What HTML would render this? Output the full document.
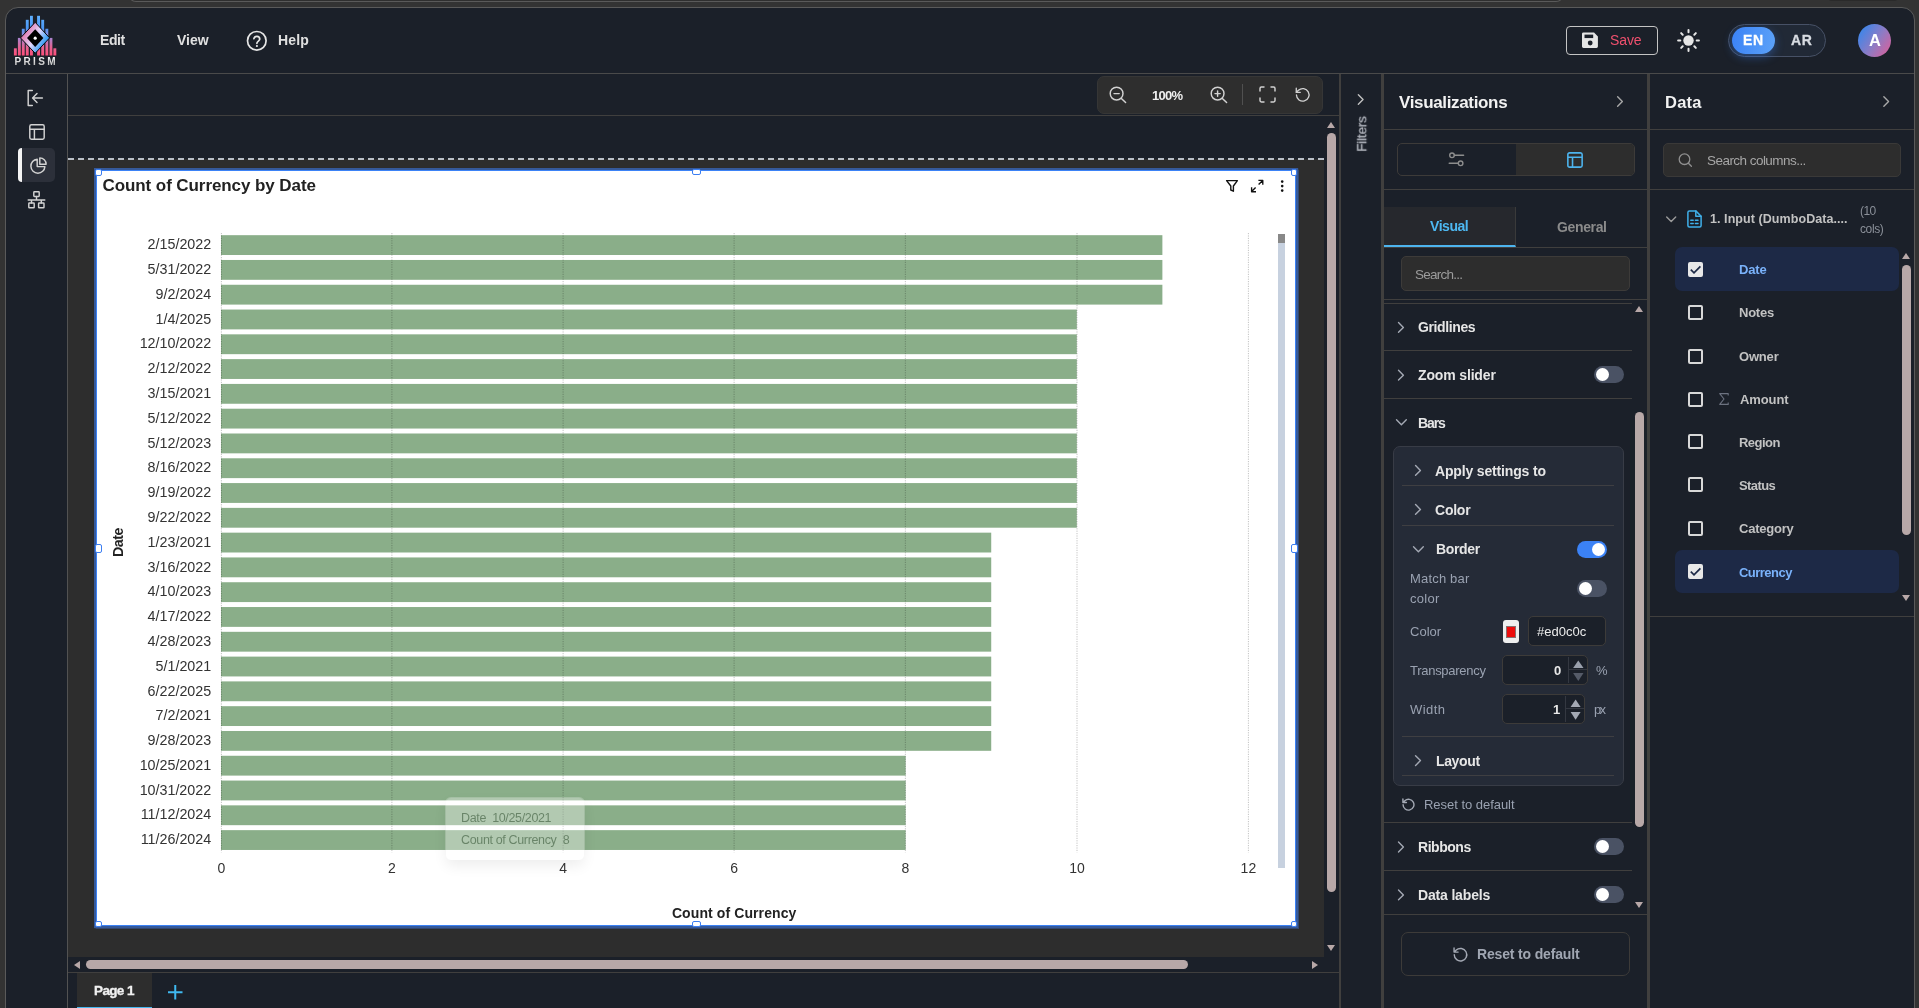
<!DOCTYPE html>
<html><head><meta charset="utf-8"><title>Prism</title>
<style>
*{box-sizing:border-box;margin:0;padding:0}
html,body{width:1919px;height:1008px;overflow:hidden;background:#333333;font-family:"Liberation Sans",sans-serif;color:#e4e4e4}
.a{position:absolute}
.t{position:absolute;white-space:nowrap;line-height:1}
.b{font-weight:bold}
#win{position:absolute;left:5px;top:7px;width:1910px;height:1020px;background:#1b2029;border:1px solid #5a5a5a;border-radius:13px 13px 0 0;overflow:hidden}
.hl{position:absolute;height:1px;background:#403f3e}
.vl{position:absolute;width:1px;background:#403f3e}
.tog{position:absolute;width:29.5px;height:17px;border-radius:9px;background:#4a5264}
.tog i{position:absolute;top:2px;left:2px;width:13px;height:13px;border-radius:50%;background:#fff}
.tog.on{background:#3b82f6}
.tog.on i{left:14.5px}
.sec{position:absolute;white-space:nowrap;line-height:1;font-weight:bold;font-size:14px;color:#e6e6e6}
.lab{position:absolute;white-space:nowrap;line-height:1;font-size:13.5px;color:#9aa3b2}
.inp{position:absolute;background:#1b2029;border:1px solid #3d3b39;border-radius:5px}
.cb{position:absolute;width:15px;height:15px;border:2px solid #d8d8d8;border-radius:2px}
.cb.on{background:#e8e8e8;border-color:#e8e8e8}
.col{position:absolute;white-space:nowrap;line-height:1;font-weight:bold;font-size:13.5px;color:#c4c4c4}
svg{position:absolute;overflow:visible}
.t,.sec,.lab,.col,svg{will-change:transform}
.ic{fill:none;stroke:#d2d2d2;stroke-width:1.45;stroke-linecap:round;stroke-linejoin:round}
</style></head><body>
<div class="a" style="left:128px;top:-6px;width:1436px;height:8px;border:1px solid #5a5a5a;border-radius:0 0 8px 8px;background:#2f2f2f"></div>
<div class="a" style="left:1826px;top:-6px;width:74px;height:7px;border-radius:0 0 6px 6px;background:#2a2a2a"></div>
<div id="win"></div>
<div class="hl" style="left:6px;top:73px;width:1908px;background:#4a4a4a"></div>
<svg style="left:0;top:0" width="70" height="70" viewBox="0 0 70 70"><defs><linearGradient id="lg1" gradientUnits="userSpaceOnUse" x1="0" y1="16" x2="0" y2="56"><stop offset="0" stop-color="#5fb0ff"/><stop offset="0.3" stop-color="#4a97f5"/><stop offset="0.55" stop-color="#a884d0"/><stop offset="0.8" stop-color="#e8608f"/><stop offset="1" stop-color="#ff4d78"/></linearGradient><linearGradient id="lg2" gradientUnits="userSpaceOnUse" x1="22" y1="30" x2="48" y2="46"><stop offset="0" stop-color="#e0609c"/><stop offset="0.5" stop-color="#e2d6fb"/><stop offset="0.8" stop-color="#4ba6f7"/><stop offset="1" stop-color="#2e94f2"/></linearGradient><linearGradient id="lg3" x1="0" y1="0" x2="0" y2="1"><stop offset="0" stop-color="#ffffff"/><stop offset="1" stop-color="#b5b5b5"/></linearGradient></defs><rect x="13.90" y="48.30" width="2.9" height="7.20" fill="url(#lg1)"/><rect x="17.90" y="37.90" width="2.9" height="17.60" fill="url(#lg1)"/><rect x="21.80" y="28.75" width="2.9" height="26.75" fill="url(#lg1)"/><rect x="25.80" y="19.80" width="2.9" height="35.70" fill="url(#lg1)"/><rect x="30.00" y="15.80" width="2.9" height="39.70" fill="url(#lg1)"/><rect x="37.10" y="15.80" width="2.9" height="39.70" fill="url(#lg1)"/><rect x="41.25" y="19.80" width="2.9" height="35.70" fill="url(#lg1)"/><rect x="45.40" y="28.75" width="2.9" height="26.75" fill="url(#lg1)"/><rect x="49.50" y="37.90" width="2.9" height="17.60" fill="url(#lg1)"/><rect x="53.40" y="48.30" width="2.9" height="7.20" fill="url(#lg1)"/><path d="M35.2 22.3 L49.6 37.9 L35.2 53.3 L20.5 37.9 Z" fill="url(#lg2)" stroke="#05070a" stroke-width="1"/><path d="M35.2 29.2 L43.4 38 L35.2 46.9 L27 38 Z" fill="#000"/><circle cx="35.2" cy="38.2" r="1.6" fill="#fff"/><text x="14.6" y="64.8" font-family="Liberation Sans" font-weight="bold" font-size="10" letter-spacing="2.3" fill="url(#lg3)">PRISM</text></svg>
<div class="t" style="left:100.00px;top:33.15px;font-size:14px;color:#e0e0e0;letter-spacing:-0.387px;font-weight:bold;">Edit</div>
<div class="t" style="left:177.00px;top:33.15px;font-size:14px;color:#e0e0e0;letter-spacing:0.030px;font-weight:bold;">View</div>
<svg style="left:246px;top:30px" width="22" height="22" viewBox="0 0 22 22"><circle cx="10.8" cy="10.8" r="9.3" fill="none" stroke="#e6e6e6" stroke-width="1.7"/><path d="M7.9 8.6a3 3 0 0 1 5.9 0.5c0 1.9-2.9 2.2-2.9 4.2" fill="none" stroke="#e6e6e6" stroke-width="1.7" stroke-linecap="round"/><circle cx="10.9" cy="16" r="1.1" fill="#e6e6e6"/></svg>
<div class="t" style="left:278.30px;top:33.15px;font-size:14px;color:#e0e0e0;letter-spacing:0.130px;font-weight:bold;">Help</div>
<div class="a" style="left:1566px;top:26px;width:92px;height:29px;border:1px solid #c4c4c4;border-radius:4px"></div>
<svg style="left:1581.7px;top:32.4px" width="16.4" height="16.6" viewBox="0 0 17 17"><path d="M1.5 0.5h11l4 4v10.5a1.5 1.5 0 0 1-1.5 1.5h-13.5a1.5 1.5 0 0 1-1.5-1.5v-13a1.5 1.5 0 0 1 1.5-1.5z" fill="#e6e6e6"/><rect x="2.6" y="2.6" width="9" height="3.6" fill="#1b2029"/><circle cx="8.5" cy="11.3" r="2.5" fill="#1b2029"/></svg>
<div class="t" style="left:1610.30px;top:33.35px;font-size:14px;color:#f0506e;letter-spacing:-0.107px;">Save</div>
<svg style="left:1676px;top:28px" width="25" height="25" viewBox="-12.5 -12.5 25 25"><circle r="5.2" fill="#e6e6e6"/><line x1="8.20" y1="0.00" x2="10.40" y2="0.00" stroke="#e6e6e6" stroke-width="2" stroke-linecap="round"/><line x1="5.80" y1="5.80" x2="7.35" y2="7.35" stroke="#e6e6e6" stroke-width="2" stroke-linecap="round"/><line x1="0.00" y1="8.20" x2="0.00" y2="10.40" stroke="#e6e6e6" stroke-width="2" stroke-linecap="round"/><line x1="-5.80" y1="5.80" x2="-7.35" y2="7.35" stroke="#e6e6e6" stroke-width="2" stroke-linecap="round"/><line x1="-8.20" y1="0.00" x2="-10.40" y2="0.00" stroke="#e6e6e6" stroke-width="2" stroke-linecap="round"/><line x1="-5.80" y1="-5.80" x2="-7.35" y2="-7.35" stroke="#e6e6e6" stroke-width="2" stroke-linecap="round"/><line x1="-0.00" y1="-8.20" x2="-0.00" y2="-10.40" stroke="#e6e6e6" stroke-width="2" stroke-linecap="round"/><line x1="5.80" y1="-5.80" x2="7.35" y2="-7.35" stroke="#e6e6e6" stroke-width="2" stroke-linecap="round"/></svg>
<div class="a" style="left:1728px;top:24px;width:98px;height:33px;border:1px solid #475166;border-radius:17px;background:#212936"></div>
<div class="a" style="left:1732px;top:27px;width:43px;height:27px;border-radius:14px;background:linear-gradient(100deg,#3b82f6,#5ca2f8);box-shadow:0 3px 10px rgba(59,130,246,0.4)"></div>
<div class="t" style="left:1743.00px;top:33.15px;font-size:14px;color:#ffffff;letter-spacing:0.640px;font-weight:bold;-webkit-text-stroke:0.3px #fff;">EN</div>
<div class="t" style="left:1790.80px;top:33.15px;font-size:14px;color:#d8dce2;letter-spacing:0.570px;font-weight:bold;-webkit-text-stroke:0.3px #d8dce2;">AR</div>
<div class="a" style="left:1858px;top:24px;width:33px;height:33px;border-radius:50%;background:linear-gradient(125deg,#3b86ea 10%,#8f7bc4 55%,#d9609a 95%)"></div>
<div class="t" style="left:1868.70px;top:32.03px;font-size:16.5px;color:#ffffff;letter-spacing:0.000px;font-weight:bold;">A</div>
<div class="vl" style="left:67px;top:74px;height:940px;background:#525252"></div>
<svg style="left:27px;top:89px" width="17" height="18" viewBox="0 0 17 18"><path class="ic" d="M5.3 1.5H1.2v15h4.1"/><path class="ic" d="M15.4 9H5.8M10 4.6L5.6 9l4.4 4.4"/></svg>
<svg style="left:29px;top:124px" width="16" height="16" viewBox="0 0 16 16"><rect class="ic" x="0.8" y="0.8" width="14.4" height="14.4" rx="1.6"/><path class="ic" d="M0.8 5.2h14.4M5.4 5.2v10"/></svg>
<div class="a" style="left:18px;top:148px;width:37px;height:34px;border-radius:5px;background:#2c303a"></div>
<div class="a" style="left:18px;top:148px;width:4px;height:34px;border-radius:4px 0 0 4px;background:#f4f4f4"></div>
<svg style="left:30px;top:157px" width="17" height="17" viewBox="0 0 17 17"><path class="ic" d="M7.2 2.2A7 7 0 1 0 14.9 9.6H7.2z"/><path class="ic" d="M9.8 0.9a6.2 6.2 0 0 1 6.3 6.3H9.8z"/></svg>
<svg style="left:28px;top:191px" width="17" height="18" viewBox="0 0 17 18"><rect class="ic" x="5.8" y="0.8" width="5.4" height="4.6" rx="0.6"/><rect class="ic" x="0.8" y="12" width="5.4" height="4.8" rx="0.6"/><rect class="ic" x="10.6" y="12" width="5.4" height="4.8" rx="0.6"/><path class="ic" d="M0.2 9h16.6M8.5 5.4V9M3.5 9v3M13.3 9v3"/></svg>
<div class="hl" style="left:68px;top:115px;width:1272px"></div>
<div class="a" style="left:68px;top:159px;width:1256px;height:798px;background:#2d2d2d"></div>
<div class="a" style="left:68px;top:158px;width:1256px;height:0;border-top:2px dashed #b9bec6"></div>
<div class="a" style="left:1097px;top:76px;width:226px;height:38px;border-radius:7px;background:#2e2e2e;border:1px solid #363636"></div>
<svg style="left:1109px;top:86px" width="18" height="18" viewBox="0 0 18 18"><circle class="ic" cx="7.6" cy="7.6" r="6.4"/><path class="ic" d="M12.4 12.4L16.6 16.6M5 7.6h5.2"/></svg>
<div class="t" style="left:1152.20px;top:89.00px;font-size:13px;color:#f0f0f0;letter-spacing:-0.727px;font-weight:bold;">100%</div>
<svg style="left:1210px;top:86px" width="18" height="18" viewBox="0 0 18 18"><circle class="ic" cx="7.6" cy="7.6" r="6.4"/><path class="ic" d="M12.4 12.4L16.6 16.6M5 7.6h5.2M7.6 5v5.2"/></svg>
<div class="vl" style="left:1242px;top:84px;height:21px;background:#505050"></div>
<svg style="left:1259px;top:86px" width="17" height="17" viewBox="0 0 17 17"><path class="ic" d="M1 5V2.4A1.4 1.4 0 0 1 2.4 1H5M12 1h2.6A1.4 1.4 0 0 1 16 2.4V5M16 12v2.6a1.4 1.4 0 0 1-1.4 1.4H12M5 16H2.4A1.4 1.4 0 0 1 1 14.600V12"/></svg>
<svg style="left:1294.5px;top:87px" width="15.5" height="15.5" viewBox="0 0 17 17"><path class="ic" d="M1.6 8.8a6.9 6.9 0 1 0 2.2-5.2L1.4 5.8"/><path class="ic" d="M1.4 1.4v4.4h4.4"/></svg>
<div class="a" style="left:1327px;top:121.5px;width:0;height:0;border-left:4.5px solid transparent;border-right:4.5px solid transparent;border-bottom:6.5px solid #b8a8a8"></div>
<div class="a" style="left:1327px;top:133px;width:9px;height:759px;border-radius:5px;background:#b8a8a8"></div>
<div class="a" style="left:1327px;top:945px;width:0;height:0;border-left:4.5px solid transparent;border-right:4.5px solid transparent;border-top:6.5px solid #b8a8a8"></div>
<div class="a" style="left:73.8px;top:960.5px;width:0;height:0;border-top:4.5px solid transparent;border-bottom:4.5px solid transparent;border-right:6.5px solid #b8a8a8"></div>
<div class="a" style="left:86px;top:960px;width:1102px;height:9.3px;border-radius:5px;background:#b8a8a8"></div>
<div class="a" style="left:1312px;top:960.5px;width:0;height:0;border-top:4.5px solid transparent;border-bottom:4.5px solid transparent;border-left:6.5px solid #b8a8a8"></div>
<div class="hl" style="left:68px;top:972px;width:1272px"></div>
<div class="a" style="left:77px;top:973px;width:75px;height:35.5px;background:#2d2d2d;border-bottom:2px solid #45b6ee"></div>
<div class="t" style="left:93.75px;top:983.57px;font-size:13.5px;color:#f0f0f0;letter-spacing:-0.628px;font-weight:bold;-webkit-text-stroke:0.35px #f0f0f0;">Page 1</div>
<svg style="left:167.5px;top:984.5px" width="14.5" height="14.5" viewBox="0 0 14.5 14.5"><path d="M7.25 0v14.5M0 7.25h14.5" stroke="#3fb8f0" stroke-width="2" fill="none"/></svg>
<div class="a" style="left:1339px;top:74px;width:2px;height:940px;background:#403f3e"></div>
<div class="a" style="left:96px;top:170px;width:1200px;height:756px;background:#fff;border:1px solid #3b82f6;box-shadow:0 0 0 2px #35599a,0 0 1px 2.5px rgba(53,89,154,0.6)"></div>
<svg style="left:0;top:0" width="1919" height="1008" viewBox="0 0 1919 1008" font-family="Liberation Sans"><rect x="221.00" y="235.18" width="941.38" height="19.83" fill="#8aae89"/><rect x="221.00" y="259.97" width="941.38" height="19.83" fill="#8aae89"/><rect x="221.00" y="284.76" width="941.38" height="19.83" fill="#8aae89"/><rect x="221.00" y="309.55" width="855.80" height="19.83" fill="#8aae89"/><rect x="221.00" y="334.34" width="855.80" height="19.83" fill="#8aae89"/><rect x="221.00" y="359.13" width="855.80" height="19.83" fill="#8aae89"/><rect x="221.00" y="383.92" width="855.80" height="19.83" fill="#8aae89"/><rect x="221.00" y="408.71" width="855.80" height="19.83" fill="#8aae89"/><rect x="221.00" y="433.50" width="855.80" height="19.83" fill="#8aae89"/><rect x="221.00" y="458.29" width="855.80" height="19.83" fill="#8aae89"/><rect x="221.00" y="483.08" width="855.80" height="19.83" fill="#8aae89"/><rect x="221.00" y="507.87" width="855.80" height="19.83" fill="#8aae89"/><rect x="221.00" y="532.66" width="770.22" height="19.83" fill="#8aae89"/><rect x="221.00" y="557.45" width="770.22" height="19.83" fill="#8aae89"/><rect x="221.00" y="582.24" width="770.22" height="19.83" fill="#8aae89"/><rect x="221.00" y="607.03" width="770.22" height="19.83" fill="#8aae89"/><rect x="221.00" y="631.82" width="770.22" height="19.83" fill="#8aae89"/><rect x="221.00" y="656.61" width="770.22" height="19.83" fill="#8aae89"/><rect x="221.00" y="681.40" width="770.22" height="19.83" fill="#8aae89"/><rect x="221.00" y="706.19" width="770.22" height="19.83" fill="#8aae89"/><rect x="221.00" y="730.98" width="770.22" height="19.83" fill="#8aae89"/><rect x="221.00" y="755.77" width="684.64" height="19.83" fill="#8aae89"/><rect x="221.00" y="780.56" width="684.64" height="19.83" fill="#8aae89"/><rect x="221.00" y="805.35" width="684.64" height="19.83" fill="#8aae89"/><rect x="221.00" y="830.14" width="684.64" height="19.83" fill="#8aae89"/><line x1="221.40" y1="233" x2="221.40" y2="852.5" stroke="rgba(0,0,0,0.24)" stroke-width="1" stroke-dasharray="1.2,1.2"/><text x="221.40" y="873" font-size="14" fill="#333" text-anchor="middle">0</text><line x1="391.90" y1="233" x2="391.90" y2="852.5" stroke="rgba(0,0,0,0.24)" stroke-width="1" stroke-dasharray="1.2,1.2"/><text x="391.90" y="873" font-size="14" fill="#333" text-anchor="middle">2</text><line x1="563.10" y1="233" x2="563.10" y2="852.5" stroke="rgba(0,0,0,0.24)" stroke-width="1" stroke-dasharray="1.2,1.2"/><text x="563.10" y="873" font-size="14" fill="#333" text-anchor="middle">4</text><line x1="734.10" y1="233" x2="734.10" y2="852.5" stroke="rgba(0,0,0,0.24)" stroke-width="1" stroke-dasharray="1.2,1.2"/><text x="734.10" y="873" font-size="14" fill="#333" text-anchor="middle">6</text><line x1="905.35" y1="233" x2="905.35" y2="852.5" stroke="rgba(0,0,0,0.24)" stroke-width="1" stroke-dasharray="1.2,1.2"/><text x="905.35" y="873" font-size="14" fill="#333" text-anchor="middle">8</text><line x1="1077.00" y1="233" x2="1077.00" y2="852.5" stroke="rgba(0,0,0,0.24)" stroke-width="1" stroke-dasharray="1.2,1.2"/><text x="1077.00" y="873" font-size="14" fill="#333" text-anchor="middle">10</text><line x1="1248.40" y1="233" x2="1248.40" y2="852.5" stroke="rgba(0,0,0,0.24)" stroke-width="1" stroke-dasharray="1.2,1.2"/><text x="1248.40" y="873" font-size="14" fill="#333" text-anchor="middle">12</text><text x="211.2" y="249.29" font-size="14.3" fill="#333" text-anchor="end">2/15/2022</text><text x="211.2" y="274.08" font-size="14.3" fill="#333" text-anchor="end">5/31/2022</text><text x="211.2" y="298.87" font-size="14.3" fill="#333" text-anchor="end">9/2/2024</text><text x="211.2" y="323.66" font-size="14.3" fill="#333" text-anchor="end">1/4/2025</text><text x="211.2" y="348.45" font-size="14.3" fill="#333" text-anchor="end">12/10/2022</text><text x="211.2" y="373.24" font-size="14.3" fill="#333" text-anchor="end">2/12/2022</text><text x="211.2" y="398.03" font-size="14.3" fill="#333" text-anchor="end">3/15/2021</text><text x="211.2" y="422.82" font-size="14.3" fill="#333" text-anchor="end">5/12/2022</text><text x="211.2" y="447.61" font-size="14.3" fill="#333" text-anchor="end">5/12/2023</text><text x="211.2" y="472.40" font-size="14.3" fill="#333" text-anchor="end">8/16/2022</text><text x="211.2" y="497.19" font-size="14.3" fill="#333" text-anchor="end">9/19/2022</text><text x="211.2" y="521.99" font-size="14.3" fill="#333" text-anchor="end">9/22/2022</text><text x="211.2" y="546.78" font-size="14.3" fill="#333" text-anchor="end">1/23/2021</text><text x="211.2" y="571.57" font-size="14.3" fill="#333" text-anchor="end">3/16/2022</text><text x="211.2" y="596.36" font-size="14.3" fill="#333" text-anchor="end">4/10/2023</text><text x="211.2" y="621.14" font-size="14.3" fill="#333" text-anchor="end">4/17/2022</text><text x="211.2" y="645.93" font-size="14.3" fill="#333" text-anchor="end">4/28/2023</text><text x="211.2" y="670.73" font-size="14.3" fill="#333" text-anchor="end">5/1/2021</text><text x="211.2" y="695.51" font-size="14.3" fill="#333" text-anchor="end">6/22/2025</text><text x="211.2" y="720.31" font-size="14.3" fill="#333" text-anchor="end">7/2/2021</text><text x="211.2" y="745.10" font-size="14.3" fill="#333" text-anchor="end">9/28/2023</text><text x="211.2" y="769.88" font-size="14.3" fill="#333" text-anchor="end">10/25/2021</text><text x="211.2" y="794.67" font-size="14.3" fill="#333" text-anchor="end">10/31/2022</text><text x="211.2" y="819.46" font-size="14.3" fill="#333" text-anchor="end">11/12/2024</text><text x="211.2" y="844.26" font-size="14.3" fill="#333" text-anchor="end">11/26/2024</text><text x="734.2" y="917.5" font-size="14" font-weight="bold" fill="#222" text-anchor="middle" letter-spacing="0.1">Count of Currency</text><text transform="translate(123.3,542.5) rotate(-90)" font-size="14.3" font-weight="bold" fill="#222" text-anchor="middle" letter-spacing="-0.45">Date</text><text x="102.5" y="191" font-size="17" font-weight="bold" fill="#222" letter-spacing="-0.08">Count of Currency by Date</text><rect x="1278" y="234" width="7" height="634" fill="#c7d1df"/><rect x="1278" y="234" width="7" height="9" fill="#888"/><path d="M1226.6 180.6h10.8l-4 5.4v5.2l-2.6-1.2v-4z" fill="none" stroke="#111" stroke-width="1.4" stroke-linejoin="round"/><path d="M1258.600 184.600l4.100-4.100M1255.600 187.600l-4 4M1258.400 180.400h4.400v4.400M1256.000 191.700h-4.400v-4.400" fill="none" stroke="#111" stroke-width="1.35" stroke-linecap="butt" stroke-linejoin="round"/><circle cx="1282.2" cy="181.600" r="1.3" fill="#111"/><circle cx="1282.200" cy="186.100" r="1.3" fill="#111"/><circle cx="1282.200" cy="190.600" r="1.3" fill="#111"/></svg>
<div class="a" style="left:446px;top:798px;width:138px;height:62px;border-radius:5px;background:rgba(255,255,255,0.34);box-shadow:0 6px 14px rgba(0,0,0,0.07), 0 0 0 1px rgba(255,255,255,0.25)"></div>
<div class="t" style="left:460.5px;top:811.5px;font-size:12.5px;color:rgba(60,90,60,0.62);letter-spacing:-0.35px;word-spacing:3px">Date 10/25/2021</div>
<div class="t" style="left:460.5px;top:833.5px;font-size:12.5px;color:rgba(60,90,60,0.62);letter-spacing:-0.35px">Count of Currency&nbsp; 8</div>
<div class="a" style="left:95px;top:169px;width:7px;height:7px;background:#fff;border:1px solid #3b7ef2;border-radius:2px"></div>
<div class="a" style="left:1290.5px;top:169px;width:6.5px;height:7px;background:#fff;border:1px solid #3b7ef2;border-radius:2px"></div>
<div class="a" style="left:95px;top:920.5px;width:7px;height:6.5px;background:#fff;border:1px solid #3b7ef2;border-radius:2px"></div>
<div class="a" style="left:1290.7px;top:920.7px;width:6.3px;height:6.3px;background:#fff;border:1px solid #3b7ef2;border-radius:2px"></div>
<div class="a" style="left:692px;top:169.3px;width:9.4px;height:6.2px;background:#fff;border:1px solid #3b7ef2;border-radius:2px"></div>
<div class="a" style="left:692px;top:920.8px;width:9.4px;height:6.2px;background:#fff;border:1px solid #3b7ef2;border-radius:2px"></div>
<div class="a" style="left:95.3px;top:544px;width:6.6px;height:9.4px;background:#fff;border:1px solid #3b7ef2;border-radius:2px"></div>
<div class="a" style="left:1291px;top:544px;width:6.6px;height:9.4px;background:#fff;border:1px solid #3b7ef2;border-radius:2px"></div>
<div class="a" style="left:1381px;top:74px;width:3px;height:940px;background:#403f3e"></div>
<div class="t" style="left:1361.6px;top:133.8px;font-size:13.5px;color:#b0b4bc;transform:translate(-50%,-50%) rotate(-90deg);letter-spacing:-0.15px;-webkit-text-stroke:0.3px #b0b4bc">Filters</div>
<div class="a" style="left:1647px;top:74px;width:3px;height:940px;background:#403f3e"></div>
<div class="t" style="left:1399.00px;top:93.91px;font-size:17px;color:#f2f2f2;letter-spacing:-0.342px;font-weight:bold;">Visualizations</div>
<div class="hl" style="left:1384px;top:129px;width:263px"></div>
<div class="a" style="left:1397px;top:143px;width:238px;height:33px;border:1px solid #3d3b39;border-radius:5px;overflow:hidden"><div class="a" style="left:118px;top:0;width:120px;height:33px;background:#2d2d2d"></div></div>
<svg style="left:1448.2px;top:151.4px" width="17" height="17" viewBox="0 0 17 17"><g fill="none" stroke="#8d8d8d" stroke-width="1.4" stroke-linecap="round"><circle cx="4" cy="4.300" r="2.3"/><path d="M6.400 4.300h9.200"/><circle cx="12.600" cy="12.300" r="2.3"/><path d="M1.200 12.300h9"/></g></svg>
<svg style="left:1566.5px;top:151.6px" width="16.2" height="16.2" viewBox="0 0 17 17"><g fill="none" stroke="#4db4ee" stroke-width="1.65" stroke-linejoin="round"><rect x="0.900" y="0.900" width="15" height="15" rx="1.8"/><path d="M0.900 5.600h15M5.800 5.600v10.300"/></g></svg>
<div class="hl" style="left:1384px;top:189px;width:263px"></div>
<div class="a" style="left:1384px;top:207px;width:132px;height:40px;background:#26282d;border-right:1px solid #3a3a3a;border-bottom:2px solid #4db4ee"></div>
<div class="t" style="left:1430.00px;top:219.15px;font-size:14px;color:#4db8f2;letter-spacing:-0.454px;font-weight:bold;">Visual</div>
<div class="t" style="left:1556.50px;top:220.05px;font-size:14px;color:#8b8b8b;letter-spacing:-0.358px;font-weight:bold;">General</div>
<div class="hl" style="left:1384px;top:247px;width:263px"></div>
<div class="a" style="left:1401px;top:256px;width:229px;height:35px;background:#2d2d2d;border:1px solid #3d3b39;border-radius:5px"></div>
<div class="t" style="left:1414.60px;top:267.57px;font-size:13.5px;color:#9c9c9c;letter-spacing:-0.763px;">Search...</div>
<div class="hl" style="left:1384px;top:299px;width:263px"></div>
<div class="hl" style="left:1384px;top:303px;width:248px"></div>
<div class="a" style="left:1634.5px;top:306px;width:0;height:0;border-left:4.5px solid transparent;border-right:4.5px solid transparent;border-bottom:6px solid #b8a8a8"></div>
<div class="a" style="left:1635px;top:412px;width:9px;height:415px;border-radius:5px;background:#b8a8a8"></div>
<div class="a" style="left:1634.5px;top:902px;width:0;height:0;border-left:4.5px solid transparent;border-right:4.5px solid transparent;border-top:6px solid #b8a8a8"></div>
<div class="t" style="left:1417.75px;top:320.40px;font-size:14px;color:#e6e6e6;letter-spacing:-0.386px;font-weight:bold;">Gridlines</div>
<div class="hl" style="left:1384px;top:350px;width:248px"></div>
<div class="t" style="left:1417.75px;top:368.15px;font-size:14px;color:#e6e6e6;letter-spacing:-0.148px;font-weight:bold;">Zoom slider</div>
<div class="tog" style="left:1594px;top:366px"><i></i></div>
<div class="hl" style="left:1384px;top:398px;width:248px"></div>
<div class="t" style="left:1417.75px;top:416.05px;font-size:14px;color:#e6e6e6;letter-spacing:-1.083px;font-weight:bold;">Bars</div>
<div class="a" style="left:1393px;top:446px;width:231px;height:340px;background:#252b37;border:1px solid #383c46;border-radius:7px"></div>
<div class="t" style="left:1435.25px;top:464.40px;font-size:14px;color:#e6e6e6;letter-spacing:-0.159px;font-weight:bold;">Apply settings to</div>
<div class="hl" style="left:1402px;top:485px;width:212px;background:#3f3f42"></div>
<div class="t" style="left:1435.25px;top:503.15px;font-size:14px;color:#e6e6e6;letter-spacing:-0.235px;font-weight:bold;">Color</div>
<div class="hl" style="left:1402px;top:525px;width:212px;background:#3f3f42"></div>
<div class="t" style="left:1435.60px;top:541.90px;font-size:14px;color:#e6e6e6;letter-spacing:-0.364px;font-weight:bold;">Border</div>
<div class="tog on" style="left:1577px;top:541px"><i></i></div>
<div class="t" style="left:1410.40px;top:572.10px;font-size:13px;color:#9aa2b1;letter-spacing:0.177px;">Match bar</div>
<div class="t" style="left:1410.40px;top:591.90px;font-size:13px;color:#9aa2b1;letter-spacing:0.297px;">color</div>
<div class="tog" style="left:1577px;top:580px"><i></i></div>
<div class="t" style="left:1410.40px;top:625.00px;font-size:13px;color:#9aa2b1;letter-spacing:0.032px;">Color</div>
<div class="a" style="left:1503px;top:620px;width:16px;height:23px;background:#efefef;border-radius:3px"></div>
<div class="a" style="left:1505.5px;top:625.5px;width:10.5px;height:12px;background:#ed0c0c;border:1px solid #8a7070"></div>
<div class="inp" style="left:1528px;top:616px;width:78px;height:29.500px"></div>
<div class="t" style="left:1537.25px;top:625.00px;font-size:13px;color:#ececec;letter-spacing:0.018px;">#ed0c0c</div>
<div class="t" style="left:1410.40px;top:663.75px;font-size:13px;color:#9aa2b1;letter-spacing:-0.280px;">Transparency</div>
<div class="inp" style="left:1502px;top:655px;width:86px;height:29.500px"></div>
<div class="t" style="left:1554.00px;top:663.75px;font-size:13px;color:#e8e8e8;letter-spacing:0.000px;font-weight:bold;">0</div>
<div class="vl" style="left:1568px;top:657px;height:25.500px;background:#343841"></div>
<div class="hl" style="left:1568px;top:669px;width:19px;background:#343841"></div>
<div class="t" style="left:1596.25px;top:663.75px;font-size:13px;color:#9aa2b1;letter-spacing:0.000px;">%</div>
<div class="t" style="left:1410.40px;top:702.75px;font-size:13px;color:#9aa2b1;letter-spacing:0.446px;">Width</div>
<div class="inp" style="left:1502px;top:693.500px;width:82.500px;height:30px"></div>
<div class="t" style="left:1552.75px;top:702.75px;font-size:13px;color:#e8e8e8;letter-spacing:0.000px;font-weight:bold;">1</div>
<div class="vl" style="left:1565px;top:695.500px;height:26px;background:#343841"></div>
<div class="hl" style="left:1565px;top:708px;width:19px;background:#343841"></div>
<div class="t" style="left:1593.75px;top:702.75px;font-size:13px;color:#9aa2b1;letter-spacing:-1.615px;">px</div>
<svg style="left:0;top:0" width="1919" height="1008" viewBox="0 0 1919 1008"><path d="M1573.100 668.100h10.400l-5.200-7.500z" fill="#9aa0ac"/><path d="M1573.100 673.100h10.400l-5.200 7.900z" fill="#555b68"/><path d="M1570.600 706.900h10l-5-7.500z" fill="#a4a9b4"/><path d="M1570.600 711.900h10l-5 7.850z" fill="#a4a9b4"/></svg>
<div class="hl" style="left:1402px;top:736px;width:212px;background:#3f3f42"></div>
<div class="t" style="left:1435.60px;top:753.75px;font-size:14px;color:#e6e6e6;letter-spacing:-0.364px;font-weight:bold;">Layout</div>
<div class="hl" style="left:1402px;top:775px;width:212px;background:#3f3f42"></div>
<svg style="left:1401.5px;top:797.5px" width="13" height="13" viewBox="0 0 17 17"><path d="M1.4 8.8a7.1 7.1 0 1 0 2.300-5.300L1.200 5.800M1.200 1.200v4.600h4.600" fill="none" stroke="#a4a9b4" stroke-width="1.83" stroke-linecap="round" stroke-linejoin="round"/></svg>
<div class="t" style="left:1424.40px;top:797.75px;font-size:13px;color:#9aa2b1;letter-spacing:-0.031px;">Reset to default</div>
<div class="hl" style="left:1384px;top:822px;width:248px"></div>
<div class="t" style="left:1417.75px;top:840.05px;font-size:14px;color:#e6e6e6;letter-spacing:-0.458px;font-weight:bold;">Ribbons</div>
<div class="tog" style="left:1594px;top:838px"><i></i></div>
<div class="hl" style="left:1384px;top:870px;width:248px"></div>
<div class="t" style="left:1417.75px;top:887.90px;font-size:14px;color:#e6e6e6;letter-spacing:-0.167px;font-weight:bold;">Data labels</div>
<div class="tog" style="left:1594px;top:886px"><i></i></div>
<div class="hl" style="left:1384px;top:914px;width:263px"></div>
<div class="a" style="left:1401px;top:932px;width:229px;height:44px;border:1px solid #3d3b39;border-radius:7px"></div>
<svg style="left:1452.5px;top:946.5px" width="15" height="15" viewBox="0 0 17 17"><path d="M1.4 8.8a7.1 7.1 0 1 0 2.300-5.300L1.200 5.800M1.200 1.200v4.600h4.600" fill="none" stroke="#a4a9b4" stroke-width="1.59" stroke-linecap="round" stroke-linejoin="round"/></svg>
<div class="t" style="left:1477.10px;top:947.25px;font-size:14px;color:#a0a6b2;letter-spacing:-0.160px;font-weight:bold;">Reset to default</div>
<svg style="left:0;top:0" width="1919" height="1008" viewBox="0 0 1919 1008"><path d="M1358.35 94.80l4.70 4.70l-4.70 4.70" fill="none" stroke="#c0c0c0" stroke-width="1.4" stroke-linecap="round" stroke-linejoin="round"/><path d="M1617.65 96.80l4.70 4.70l-4.70 4.70" fill="none" stroke="#a8a8a8" stroke-width="1.4" stroke-linecap="round" stroke-linejoin="round"/><path d="M1883.85 96.80l4.70 4.70l-4.70 4.70" fill="none" stroke="#a8a8a8" stroke-width="1.4" stroke-linecap="round" stroke-linejoin="round"/><path d="M1398.50 322.50l4.90 4.90l-4.90 4.90" fill="none" stroke="#a4a9b4" stroke-width="1.4" stroke-linecap="round" stroke-linejoin="round"/><path d="M1398.50 370.30l4.90 4.90l-4.90 4.90" fill="none" stroke="#a4a9b4" stroke-width="1.4" stroke-linecap="round" stroke-linejoin="round"/><path d="M1396.50 419.75l4.90 4.90l4.90 -4.90" fill="none" stroke="#a4a9b4" stroke-width="1.4" stroke-linecap="round" stroke-linejoin="round"/><path d="M1415.55 465.50l4.90 4.90l-4.90 4.90" fill="none" stroke="#a4a9b4" stroke-width="1.4" stroke-linecap="round" stroke-linejoin="round"/><path d="M1415.55 504.50l4.90 4.90l-4.90 4.90" fill="none" stroke="#a4a9b4" stroke-width="1.4" stroke-linecap="round" stroke-linejoin="round"/><path d="M1413.50 546.85l4.90 4.90l4.90 -4.90" fill="none" stroke="#a4a9b4" stroke-width="1.4" stroke-linecap="round" stroke-linejoin="round"/><path d="M1415.55 755.70l4.90 4.90l-4.90 4.90" fill="none" stroke="#a4a9b4" stroke-width="1.4" stroke-linecap="round" stroke-linejoin="round"/><path d="M1398.50 842.10l4.90 4.90l-4.90 4.90" fill="none" stroke="#a4a9b4" stroke-width="1.4" stroke-linecap="round" stroke-linejoin="round"/><path d="M1398.50 890.00l4.90 4.90l-4.90 4.90" fill="none" stroke="#a4a9b4" stroke-width="1.4" stroke-linecap="round" stroke-linejoin="round"/><path d="M1666.70 216.95l4.50 4.50l4.50 -4.50" fill="none" stroke="#9a9a9a" stroke-width="1.4" stroke-linecap="round" stroke-linejoin="round"/></svg>
<div class="t" style="left:1665.00px;top:93.73px;font-size:16.5px;color:#f2f2f2;letter-spacing:0.237px;font-weight:bold;">Data</div>
<div class="hl" style="left:1650px;top:129px;width:264px"></div>
<div class="a" style="left:1663px;top:143px;width:238px;height:34px;background:#2d2d2d;border:1px solid #3a3938;border-radius:5px"></div>
<svg style="left:1677.5px;top:153px" width="15" height="15" viewBox="0 0 15 15"><circle cx="6.500" cy="6.200" r="5.300" fill="none" stroke="#8f8f8f" stroke-width="1.3"/><path d="M10.400 10.200l3 3.100" stroke="#8f8f8f" stroke-width="1.3" stroke-linecap="round"/></svg>
<div class="t" style="left:1706.80px;top:153.97px;font-size:13.5px;color:#a6a6a6;letter-spacing:-0.542px;">Search columns...</div>
<div class="hl" style="left:1650px;top:189px;width:264px"></div>
<svg style="left:1687px;top:210px" width="15" height="18" viewBox="0 0 15 18"><g fill="none" stroke="#3fb0ea" stroke-width="1.5" stroke-linejoin="round" stroke-linecap="round"><path d="M8.800 0.900H2.400A1.500 1.500 0 0 0 0.900 2.400v13.200a1.500 1.500 0 0 0 1.500 1.500h10.200a1.500 1.500 0 0 0 1.500-1.500V6.200z"/><path d="M8.800 0.900v5.300h5.300"/><path d="M3.800 10.200h2.400M8.400 10.200h2.600M3.800 13.400h2.400M8.400 13.400h2.600"/></g></svg>
<div class="t" style="left:1709.80px;top:213.42px;font-size:12.5px;color:#c2c2c2;letter-spacing:0.067px;font-weight:bold;">1. Input (DumboData....</div>
<div class="t" style="left:1859.70px;top:204.94px;font-size:12px;color:#8a8f98;letter-spacing:-0.570px;">(10</div>
<div class="t" style="left:1859.70px;top:222.84px;font-size:12px;color:#8a8f98;letter-spacing:-0.380px;">cols)</div>
<div class="a" style="left:1675px;top:247.1px;width:224px;height:43.500px;border-radius:7px;background:#1d2946"></div>
<div class="cb on" style="left:1688.2px;top:261.6px"></div>
<svg style="left:1688.2px;top:261.6px" width="15" height="15" viewBox="0 0 15 15"><path d="M2.800 7.600l3.200 3.200L12.400 4.400" fill="none" stroke="#1d2946" stroke-width="1.700"/></svg>
<div class="t" style="left:1739.30px;top:262.90px;font-size:13px;color:#7ab2fb;letter-spacing:-0.170px;font-weight:bold;">Date</div>
<div class="cb" style="left:1688.2px;top:305.3px"></div>
<div class="t" style="left:1739.30px;top:306.00px;font-size:13px;color:#c2c2c2;letter-spacing:-0.235px;font-weight:bold;">Notes</div>
<div class="cb" style="left:1688.2px;top:348.6px"></div>
<div class="t" style="left:1738.90px;top:350.00px;font-size:13px;color:#c2c2c2;letter-spacing:-0.182px;font-weight:bold;">Owner</div>
<div class="cb" style="left:1688.2px;top:391.9px"></div>
<svg style="left:1719px;top:392.7px" width="10" height="12" viewBox="0 0 10 12"><path d="M9.200 2.600V0.600H0.700L5 6L0.700 11.400H9.200V9.400" fill="none" stroke="#6c7280" stroke-width="1.1" stroke-linejoin="round"/></svg>
<div class="t" style="left:1740.20px;top:393.00px;font-size:13px;color:#c2c2c2;letter-spacing:-0.095px;font-weight:bold;">Amount</div>
<div class="cb" style="left:1688.2px;top:434.4px"></div>
<div class="t" style="left:1739.30px;top:435.80px;font-size:13px;color:#c2c2c2;letter-spacing:-0.534px;font-weight:bold;">Region</div>
<div class="cb" style="left:1688.2px;top:477.2px"></div>
<div class="t" style="left:1738.90px;top:479.00px;font-size:13px;color:#c2c2c2;letter-spacing:-0.583px;font-weight:bold;">Status</div>
<div class="cb" style="left:1688.2px;top:521.2px"></div>
<div class="t" style="left:1738.90px;top:521.90px;font-size:13px;color:#c2c2c2;letter-spacing:-0.236px;font-weight:bold;">Category</div>
<div class="a" style="left:1675px;top:549.6px;width:224px;height:43.500px;border-radius:7px;background:#1d2946"></div>
<div class="cb on" style="left:1688.2px;top:564.1px"></div>
<svg style="left:1688.2px;top:564.1px" width="15" height="15" viewBox="0 0 15 15"><path d="M2.800 7.600l3.200 3.200L12.400 4.400" fill="none" stroke="#1d2946" stroke-width="1.700"/></svg>
<div class="t" style="left:1738.90px;top:565.80px;font-size:13px;color:#7ab2fb;letter-spacing:-0.524px;font-weight:bold;">Currency</div>
<div class="a" style="left:1902px;top:252.5px;width:0;height:0;border-left:4.5px solid transparent;border-right:4.5px solid transparent;border-bottom:6.5px solid #b8a8a8"></div>
<div class="a" style="left:1902px;top:265px;width:9px;height:269.500px;border-radius:5px;background:#b8a8a8"></div>
<div class="a" style="left:1902px;top:595px;width:0;height:0;border-left:4.5px solid transparent;border-right:4.5px solid transparent;border-top:6.5px solid #b8a8a8"></div>
<div class="hl" style="left:1650px;top:616px;width:264px"></div>
</body></html>
